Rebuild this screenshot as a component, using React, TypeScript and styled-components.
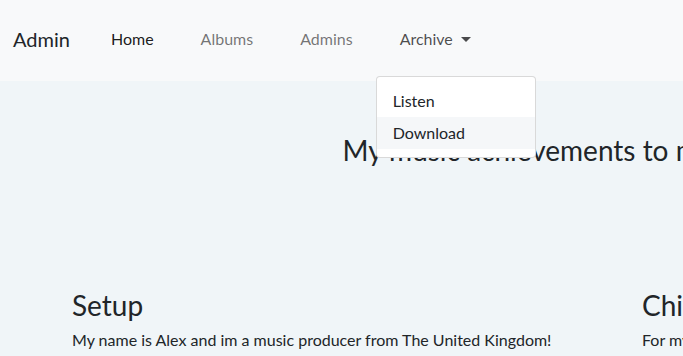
import React from 'react';
import styled, {createGlobalStyle} from 'styled-components';

const GlobalStyle = createGlobalStyle`
  html, body {
    margin: 0;
    padding: 0;
    overflow: hidden;
    background: #f0f5f8;
    font-family: "Lato", "Noto Sans", sans-serif;
    color: #212529;
  }
`;

const Page = styled.div`
  width: 683px;
  height: 356px;
  overflow: hidden;
  position: relative;
  background: #f0f5f8;
`;

const Navbar = styled.nav`
  height: 81px;
  box-sizing: border-box;
  padding-bottom: 3px;
  display: flex;
  align-items: center;
  padding-left: 13px;
  background: #f8f9fa;
  position: relative;
  z-index: 2;
`;

const Brand = styled.div`
  font-size: 20px;
  line-height: 30px;
  color: #212529;
  margin-right: 41px;
`;

const NavList = styled.div`
  display: flex;
  align-items: center;
  gap: 47px;
`;

const NavLink = styled.div<{tone: 'active' | 'muted' | 'open'}>`
  position: relative;
  font-size: 16px;
  line-height: 24px;
  color: ${p => p.tone === 'active' ? 'rgba(0,0,0,0.9)' : p.tone === 'open' ? 'rgba(0,0,0,0.7)' : 'rgba(0,0,0,0.55)'};
  display: flex;
  align-items: center;
`;

const Caret = styled.span`
  display: inline-block;
  margin-left: 8px;
  border-top: 5px solid currentColor;
  border-left: 5px solid transparent;
  border-right: 5px solid transparent;
`;

const Menu = styled.div`
  position: absolute;
  top: 49px;
  left: -24px;
  width: 158px;
  padding: 8px 0;
  background: #fff;
  border: 1px solid rgba(0,0,0,0.15);
  border-radius: 4px;
`;

const MenuItem = styled.div<{hover?: boolean}>`
  padding: 4px 16px;
  font-size: 16px;
  line-height: 24px;
  color: #212529;
  background: ${p => p.hover ? '#f5f7f9' : 'transparent'};
`;

const Main = styled.main`
  width: 1056px;
`;

const Title = styled.h1`
  margin: 0;
  padding-top: 52px;
  font-size: 28px;
  line-height: 34px;
  font-weight: 400;
  text-align: center;
  color: #212529;
`;

const Row = styled.div`
  display: grid;
  grid-template-columns: 570px 570px;
  padding: 121px 0 0 72px;
`;

const Column = styled.section`
  min-width: 0;
`;

const ColTitle = styled.h2`
  margin: 0 0 6px;
  font-size: 28px;
  line-height: 34px;
  font-weight: 400;
  color: #212529;
`;

const Text = styled.p`
  margin: 0;
  font-size: 16px;
  line-height: 24px;
  white-space: nowrap;
  color: #212529;
`;

export default function App() {
  return (
    <Page>
      <GlobalStyle />
      <Navbar>
        <Brand>Admin</Brand>
        <NavList>
          <NavLink tone="active">Home</NavLink>
          <NavLink tone="muted">Albums</NavLink>
          <NavLink tone="muted">Admins</NavLink>
          <NavLink tone="open">
            Archive<Caret />
            <Menu>
              <MenuItem>Listen</MenuItem>
              <MenuItem hover>Download</MenuItem>
            </Menu>
          </NavLink>
        </NavList>
      </Navbar>
      <Main>
        <Title>My music achievements to me</Title>
        <Row>
          <Column>
            <ColTitle>Setup</ColTitle>
            <Text>My name is Alex and im a music producer from The United Kingdom!</Text>
          </Column>
          <Column>
            <ColTitle>Children</ColTitle>
            <Text>For my children I make music</Text>
          </Column>
        </Row>
      </Main>
    </Page>
  );
}
